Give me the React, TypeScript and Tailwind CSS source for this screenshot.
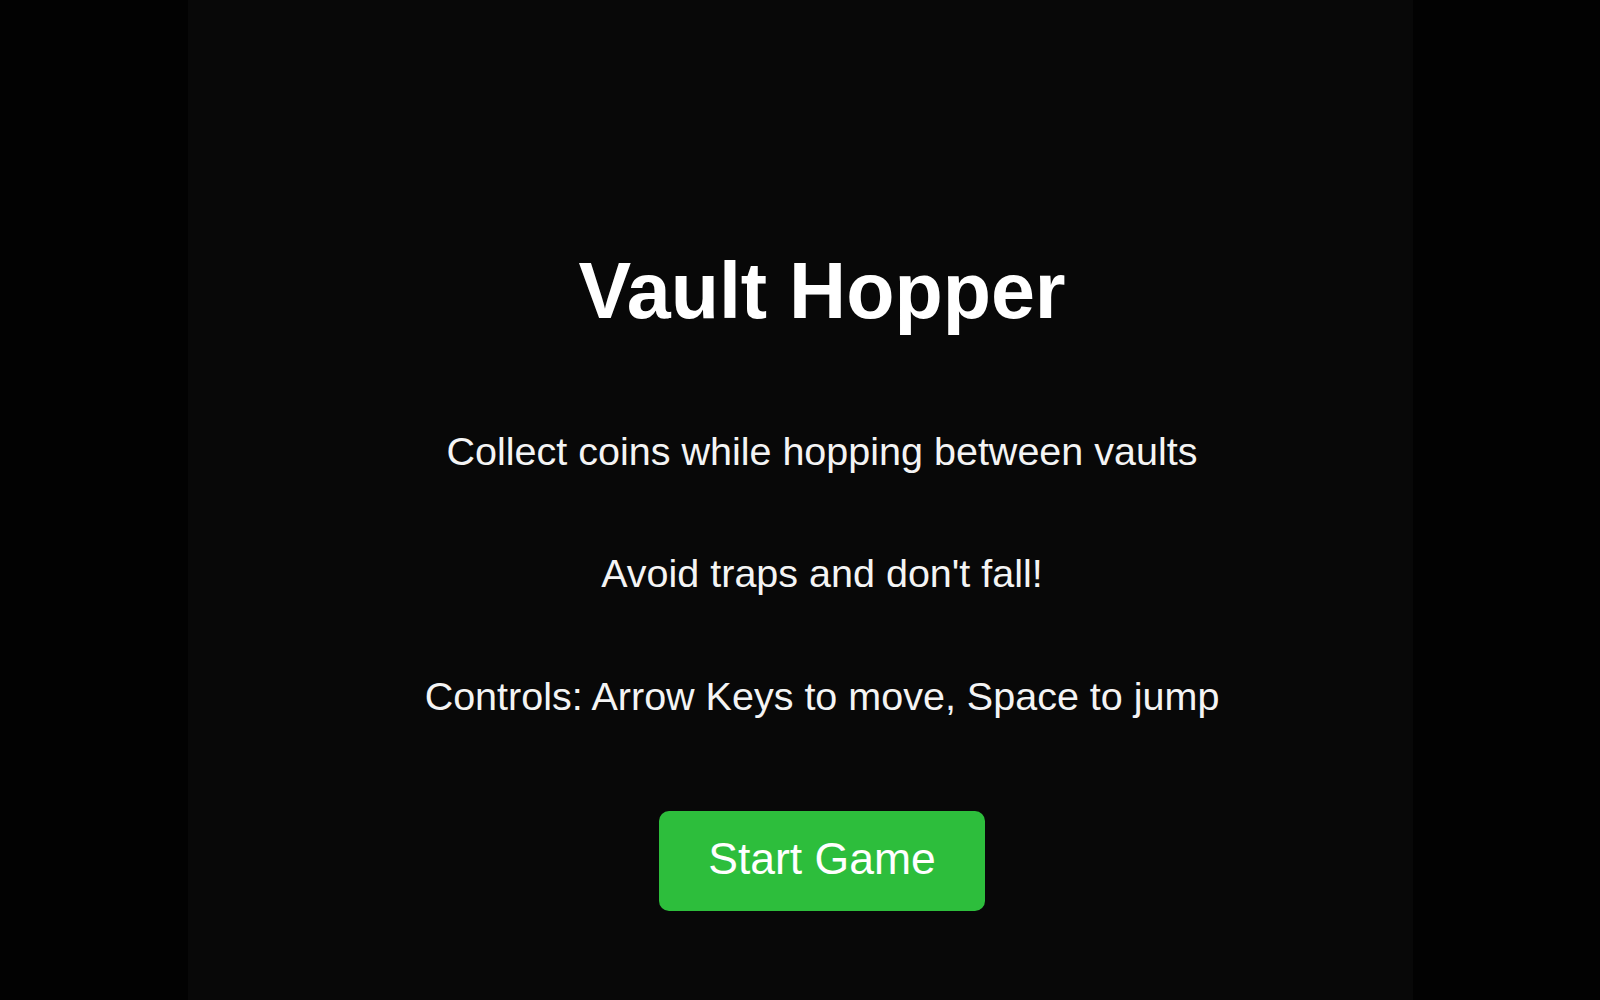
export default function App() {
  return (
    <main className="min-h-screen w-full bg-[#020202]" style={{ fontFamily: '"Liberation Sans", Arial, sans-serif' }}>
      <section className="mx-auto flex min-h-screen w-[1225px] flex-col items-center bg-[#080808] pl-[44px] pt-[246px] text-center">
        <h1 className="h-[90px] text-[79px] font-bold leading-[90px] text-white">Vault Hopper</h1>
        <p className="mt-[91px] text-[39.5px] leading-[48px] text-[#f4f4f4]">
          Collect coins while hopping between vaults
        </p>
        <p className="mt-[74px] text-[39.5px] leading-[48px] text-[#f4f4f4]">Avoid traps and don't fall!</p>
        <p className="mt-[75px] text-[39.5px] leading-[48px] text-[#f4f4f4]">
          Controls: Arrow Keys to move, Space to jump
        </p>
        <button
          type="button"
          className="mt-[91px] flex h-[100px] w-[326px] items-center justify-center rounded-[10px] bg-[#2dbe3c] pb-[3px] text-[44.5px] text-white"
        >
          Start Game
        </button>
      </section>
    </main>
  );
}
